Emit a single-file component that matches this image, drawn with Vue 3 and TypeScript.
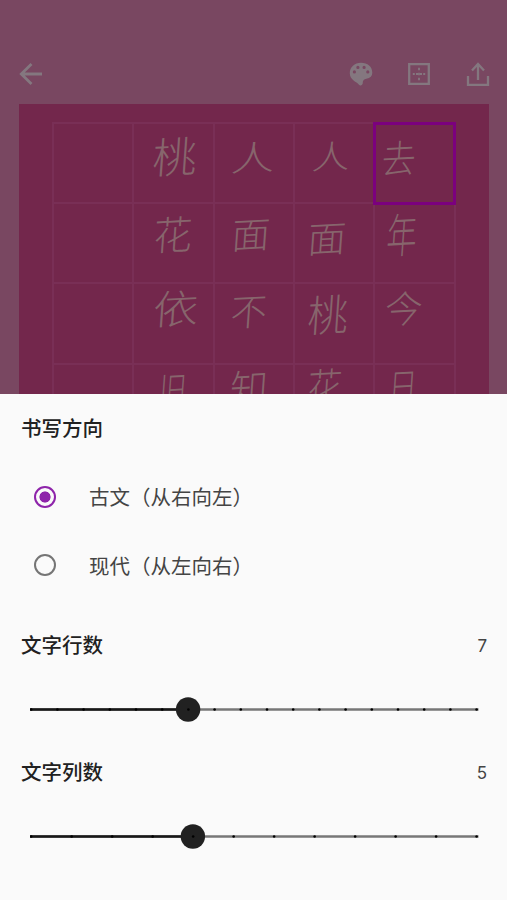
<script setup lang="ts">
import { ref } from 'vue'

interface Glyph {
  char: string
  x: number
  y: number
  w: number
  h: number
}

// Each glyph is placed by the centre and scale of its handwriting inside the cell.
const g = (char: string, x: number, y: number, w = 1, h = 1): Glyph => ({ char, x, y, w, h })

const cells: Glyph[] = [
  g('', 0, 0), g('桃', 41, 31, 1.2, 1.14), g('人', 38, 32, 1.18, 0.92), g('人', 36, 31, 1.02, 0.87), g('去', 23, 32, 0.92, 1.04),
  g('', 0, 0), g('花', 39, 29, 1.05, 1.07), g('面', 36, 29, 1.04, 0.98), g('面', 32, 33, 1.04, 0.98), g('年', 27, 29, 0.82, 1.26),
  g('', 0, 0), g('依', 42, 23, 1.22, 1.07), g('不', 34, 26, 0.98, 1), g('桃', 33, 29, 1.1, 1.16), g('今', 29, 23, 1.02, 1.02),
  g('', 0, 0), g('旧', 39, 24, 0.74, 1.05), g('知', 34, 22, 1.02, 1.08), g('花', 30, 20, 0.94, 1.06), g('日', 28, 20, 0.78, 1.02),
]

const glyphStyle = (c: Glyph) => ({
  left: `${c.x}px`,
  top: `${c.y}px`,
  transform: `translate(-50%, -50%) rotate(-3deg) skewX(-7deg) scale(${c.w}, ${c.h})`,
})

const direction = ref('rtl')
const options = [
  { value: 'rtl', label: '古文（从右向左）' },
  { value: 'ltr', label: '现代（从左向右）' },
]

const sliders = [
  { title: '文字行数', value: 7, index: 6, steps: 17 },
  { title: '文字列数', value: 5, index: 4, steps: 11 },
]
const tickX = (i: number, steps: number) => 1.2 + (i * 445.4) / steps
</script>

<template>
  <div class="screen">
    <header class="toolbar">
      <svg class="icon back" viewBox="0 0 24 24"><path d="M23 12H2M12.500 2 2.300 12l10.200 10" /></svg>
      <nav class="actions">
        <svg class="icon solid" viewBox="0 0 24 24">
          <path fill-rule="evenodd" d="M12 .8C5.600.8.8 5.300.8 11.300c0 3.400 1.600 5.200 3.800 7.200 1.600 1.500 3.400 1.800 4.700 3.600.7 1 1.300 1.500 2.500 1.300 1.600-.2 2-1.400 2-2.800 0-2 1.200-3.600 3.600-3.900 3.900-.5 5.900-2.400 5.900-5.900C23.300 4.500 18.500.8 12 .8ZM5.400 8.300a1.600 1.600 0 1 1 0 3.200 1.600 1.600 0 0 1 0-3.200Zm3.500-4.500a1.600 1.600 0 1 1 0 3.200 1.600 1.600 0 0 1 0-3.200Zm6.200 0a1.600 1.600 0 1 1 0 3.200 1.600 1.600 0 0 1 0-3.200Zm3.700 4.500a1.600 1.600 0 1 1 0 3.200 1.600 1.600 0 0 1 0-3.200Z" />
        </svg>
        <svg class="icon" viewBox="0 0 24 24">
          <path d="M2.200 2.200h19.600v19.600H2.200Z" />
          <path class="dots" d="M12 5.800v2.400M12 10.800v2.400M12 15.800v2.400M5.800 12h2M9 12h2M13 12h2M16.200 12h2" />
        </svg>
        <svg class="icon" viewBox="0 0 24 24"><path d="M12 18V2.500M6 8.500l6-6.500 6 6.500M2 14v9h20v-9" /></svg>
      </nav>
    </header>

    <main class="paper">
      <div class="grid">
        <div v-for="(c, i) in cells" :key="i" class="cell" :class="{ selected: i === 4 }">
          <span v-if="c.char" class="glyph" :style="glyphStyle(c)">{{ c.char }}</span>
        </div>
      </div>
    </main>

    <section class="sheet">
      <h2>书写方向</h2>
      <div class="options">
        <div v-for="o in options" :key="o.value" class="option" @click="direction = o.value">
          <span class="radio" :class="{ checked: direction === o.value }"></span>
          <span class="label">{{ o.label }}</span>
        </div>
      </div>
      <div v-for="s in sliders" :key="s.title" class="setting">
        <div class="heading">
          <h2>{{ s.title }}</h2>
          <span class="value">{{ s.value }}</span>
        </div>
        <svg class="slider" viewBox="0 0 449 26">
          <path class="track" d="M0 12.500H448.500" />
          <path class="filled" :d="`M0 12.500H${tickX(s.index, s.steps)}`" />
          <circle class="thumb" :cx="tickX(s.index, s.steps) - 0.3" cy="12.500" r="12.200" />
          <circle v-for="n in s.steps + 1" :key="n" :cx="tickX(n - 1, s.steps)" cy="12.500" r="1.300" />
        </svg>
      </div>
    </section>
  </div>
</template>

<style>
body {
  margin: 0;
}
</style>

<style scoped>
.screen {
  width: 507px;
  height: 900px;
  display: flex;
  flex-direction: column;
  overflow: hidden;
  background: #794761;
  font-family: Roboto, "Noto Sans CJK SC", sans-serif;
}
.toolbar {
  height: 104px;
  box-sizing: border-box;
  flex: none;
  display: flex;
  justify-content: space-between;
  align-items: flex-start;
  padding: 62px 17.500px 0 18.500px;
}
.actions {
  display: flex;
  gap: 34.500px;
}
.icon {
  width: 24px;
  height: 24px;
  fill: none;
  stroke: #84777f;
  stroke-width: 2.300;
}
.icon.back {
  stroke-width: 2.800;
}
.icon.solid {
  fill: #84777f;
  stroke: none;
}
.dots {
  stroke-width: 1.800;
}
.paper {
  height: 290px;
  flex: none;
  box-sizing: border-box;
  margin: 0 18.500px 0 19px;
  padding: 18px 32px 0 33px;
  overflow: hidden;
  background: #73274c;
}
.grid {
  display: grid;
  grid-template-columns: repeat(4, 80.300px) 82.700px;
  grid-auto-rows: 80.200px;
}
.cell {
  position: relative;
  box-sizing: border-box;
  border-left: 2px solid #792f56;
  border-top: 2px solid #792f56;
}
.cell:nth-child(5n) {
  border-right: 2px solid #792f56;
}
.cell.selected {
  height: 82.500px;
  z-index: 1;
  border: 3px solid #7b007e;
}
.glyph {
  position: absolute;
  font: 300 37px/1 "Noto Sans CJK SC", sans-serif;
  color: #87656c;
}
.sheet {
  flex: 1;
  box-sizing: border-box;
  padding: 21px 20px 0 21px;
  background: #fafafa;
  color: #212121;
}
h2 {
  margin: 0;
  font-size: 20.500px;
  line-height: 28px;
  font-weight: 500;
}
.options {
  display: flex;
  flex-direction: column;
  margin-top: 19.500px;
}
.option {
  display: flex;
  align-items: center;
  gap: 33px;
  height: 68.500px;
  padding-left: 13px;
  font-size: 20.500px;
  color: #444;
}
.label {
  padding-bottom: 1.500px;
}
.radio {
  width: 22px;
  height: 22px;
  box-sizing: border-box;
  border: 2.500px solid #757575;
  border-radius: 50%;
}
.radio.checked {
  border-color: #8e24aa;
  background: radial-gradient(circle, #8e24aa 5.200px, transparent 5.900px);
}
.setting {
  height: 127px;
}
.options + .setting {
  margin-top: 32.500px;
}
.heading {
  display: flex;
  justify-content: space-between;
  align-items: center;
}
.value {
  font: 17px/28px Inter, sans-serif;
  color: #444;
}
.slider {
  display: block;
  width: 449px;
  height: 26px;
  margin: 36.500px 0 0 9px;
}
.track {
  stroke: #777;
  stroke-width: 2.400;
}
.filled {
  stroke: #181818;
  stroke-width: 2.600;
}
.thumb {
  fill: #212121;
}
</style>
